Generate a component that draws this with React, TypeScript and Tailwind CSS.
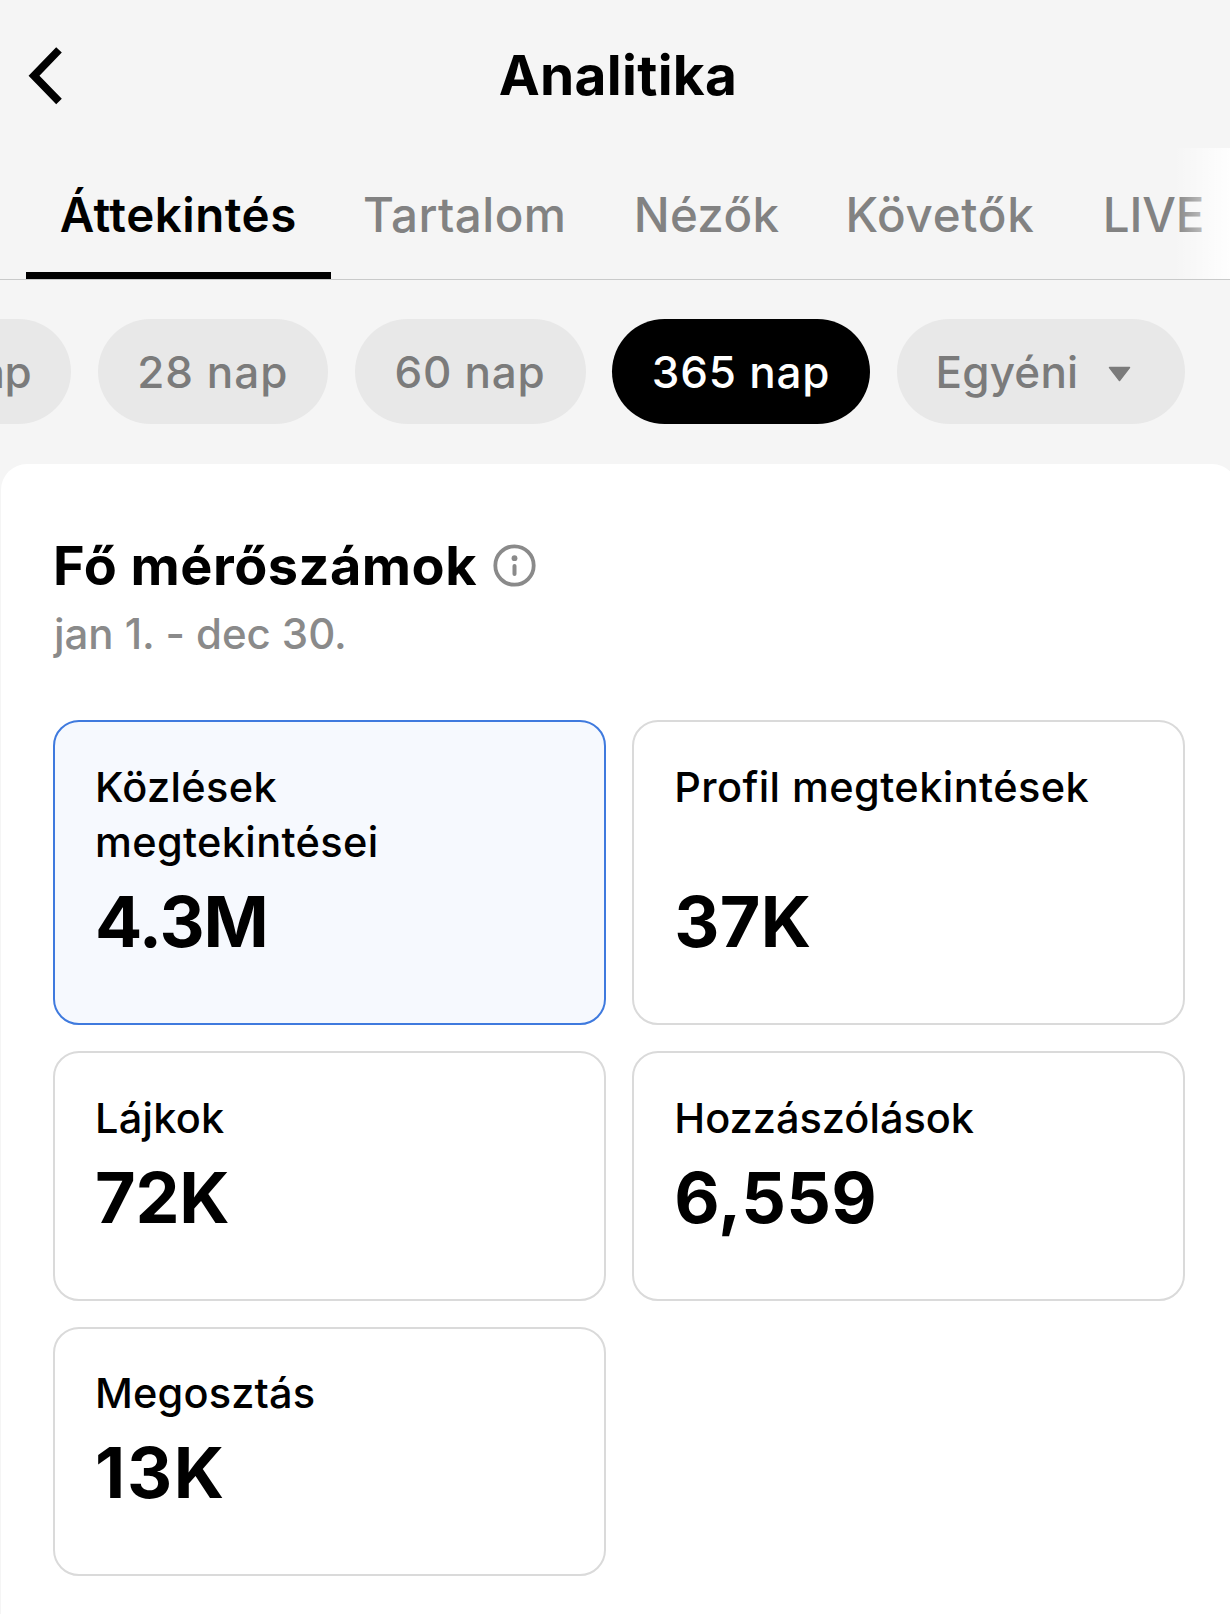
import React, { useState } from 'react';
import clsx from 'clsx';

interface Metric {
  id: string;
  label: string;
  value: string;
  labelClass: string;
  valueClass: string;
}

const tabs = [
  { name: 'Áttekintés', className: 'w-[304.5px] tracking-[0.5px]' },
  { name: 'Tartalom', className: 'w-[268.5px] tracking-[0.45px]' },
  { name: 'Nézők', className: 'w-[215px] tracking-[0.3px]' },
  { name: 'Követők', className: 'w-[252px] tracking-[0.75px]' },
  { name: 'LIVE', className: 'w-[175px] tracking-[-0.1px]' },
];

const ranges = [
  { name: '7 nap', className: 'w-[204px] justify-end pr-[40px] tracking-[-0.6px]' },
  { name: '28 nap', className: 'w-[230.5px] justify-center tracking-[1px]' },
  { name: '60 nap', className: 'w-[231px] justify-center tracking-[0.75px]' },
  { name: '365 nap', className: 'w-[258px] justify-center tracking-[0.8px]' },
];

const metrics: Metric[] = [
  { id: 'views', label: 'Közlések megtekintései', value: '4.3M', labelClass: 'w-[300px] tracking-[0.35px]', valueClass: 'tracking-[-1.15px]' },
  { id: 'profile', label: 'Profil megtekintések', value: '37K', labelClass: 'tracking-[0.42px]', valueClass: 'tracking-[0.3px]' },
  { id: 'likes', label: 'Lájkok', value: '72K', labelClass: 'tracking-[0.25px]', valueClass: 'tracking-[-0.3px]' },
  { id: 'comments', label: 'Hozzászólások', value: '6,559', labelClass: '', valueClass: 'tracking-[0.3px]' },
  { id: 'shares', label: 'Megosztás', value: '13K', labelClass: 'tracking-[0.15px]', valueClass: 'tracking-[1.7px]' },
];

export default function App() {
  const [tab, setTab] = useState('Áttekintés');
  const [range, setRange] = useState('365 nap');
  const [metric, setMetric] = useState('views');

  return (
    <div className="flex h-[1614px] w-[1230px] flex-col overflow-hidden bg-[#f5f5f5] font-['Inter',sans-serif] text-black">
      <header className="flex h-[148px] shrink-0 items-center pt-[2px]">
        <button className="w-[100px] pl-[28px]" aria-label="Vissza">
          <svg width="36" height="60" viewBox="0 0 36 60" fill="none">
            <path d="M31 4.9 L6 30.7 L31 56.5" stroke="#000" strokeWidth="7.8" />
          </svg>
        </button>
        <h1 className="w-[1036px] pt-px text-center text-[55px] font-bold tracking-[0.3px]">Analitika</h1>
      </header>

      <nav className="relative flex h-[132px] shrink-0 border-b border-[#c9caca] pl-[26px]">
        {tabs.map((t) => (
          <button
            key={t.name}
            onClick={() => setTab(t.name)}
            className={clsx(
              'flex shrink-0 flex-col text-[47.5px] whitespace-nowrap',
              t.className,
              tab === t.name ? 'font-[580]' : 'font-[550] text-[#828282]'
            )}
          >
            <span className="flex h-[124px] w-full items-center justify-center pt-[10px]">{t.name}</span>
            {tab === t.name && <span className="h-[7px] w-full bg-black" />}
          </button>
        ))}
        <div className="absolute top-0 right-0 h-[131px] w-[56px] bg-gradient-to-r from-white/0 to-white/90" />
      </nav>

      <div className="-ml-[133px] flex shrink-0 gap-[26.5px] pt-[39px] pb-[40px] text-[44px] font-[550]">
        {ranges.map((r) => (
          <button
            key={r.name}
            onClick={() => setRange(r.name)}
            className={clsx(
              'flex h-[105px] shrink-0 items-center rounded-full whitespace-nowrap',
              r.className,
              range === r.name ? 'bg-black text-white' : 'bg-[#e8e8e8] text-[#7b7b7b]'
            )}
          >
            {r.name}
          </button>
        ))}
        <button className="flex h-[105px] w-[288.5px] shrink-0 items-center gap-[30px] rounded-full bg-[#e8e8e8] pl-[39px] tracking-[0.2px] text-[#7b7b7b]">
          Egyéni
          <svg width="23" height="16" viewBox="0 0 23 16" className="mt-[4px]">
            <path d="M1.5 1.5 H21.5 L11.5 14.5 Z" fill="#7b7b7b" stroke="#7b7b7b" strokeWidth="1.5" strokeLinejoin="round" />
          </svg>
        </button>
      </div>

      <main className="ml-px w-[1237px] flex-1 rounded-t-[26px] bg-white pt-[66px] pl-[52px]">
        <div className="flex items-center">
          <h2 className="w-[440px] pt-px text-[54px] leading-[69px] font-bold tracking-[0.5px] whitespace-nowrap">
            Fő mérőszámok
          </h2>
          <svg width="43" height="43" viewBox="0 0 43 43" fill="none">
            <circle cx="21.5" cy="21.5" r="19.2" stroke="#8a8a8a" strokeWidth="3.8" />
            <circle cx="21.5" cy="14.2" r="2.9" fill="#8a8a8a" />
            <path d="M21.5 22 V30" stroke="#8a8a8a" strokeWidth="4" strokeLinecap="round" />
          </svg>
        </div>
        <p className="mt-[5.5px] ml-px text-[42px] leading-[56px] font-[550] tracking-[-0.05px] text-[#8a8a8a]">
          jan 1. - dec 30.
        </p>

        <div className="mt-[58.5px] grid w-[1132px] grid-cols-2 grid-rows-[305px_249.5px_249.5px] gap-x-[26.5px] gap-y-[26px]">
          {metrics.map((m) => (
            <button
              key={m.id}
              onClick={() => setMetric(m.id)}
              className={clsx(
                'flex flex-col justify-between rounded-[26px] border-2 px-[40px] pt-[37.5px] pb-[59px] text-left',
                metric === m.id ? 'border-[#3f7ade] bg-[#f6f9fe]' : 'border-[#dadada] bg-white'
              )}
            >
              <span className={clsx('text-[41.5px] leading-[55.5px] font-[550]', m.labelClass)}>{m.label}</span>
              <span className={clsx('text-[70px] leading-[84px] font-[660]', m.valueClass)}>{m.value}</span>
            </button>
          ))}
        </div>
      </main>
    </div>
  );
}
